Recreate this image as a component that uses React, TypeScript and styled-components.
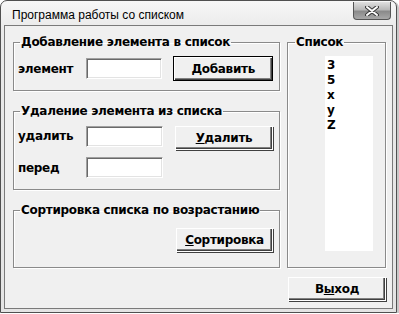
import styled, { createGlobalStyle } from "styled-components";

const GlobalStyle = createGlobalStyle`
    html, body {
        margin: 0;
        padding: 0;
        background: #ffffff;
    }
    * {
        box-sizing: border-box;
    }
`;

const Window = styled.div`
    width: 397px;
    height: 313px;
    display: flex;
    flex-direction: column;
    border: 1px solid #505050;
    border-radius: 7px 7px 0 0;
    background: linear-gradient(#f7f7f7, #e9e9e9 30px, #e4e4e4);
    box-shadow: 2px 1px 0 #c8c8c8;
`;

const TitleBar = styled.div`
    height: 24px;
    display: flex;
    align-items: center;
    justify-content: space-between;
    padding: 0 5px 0 11px;
`;

const Caption = styled.span`
    font-family: "Liberation Sans", "Noto Sans", sans-serif;
    font-size: 12px;
    color: #000;
    margin-top: 3px;
`;

const CloseButton = styled.div`
    width: 38px;
    height: 18px;
    margin-top: -4px;
    border: 1px solid #555;
    border-top: none;
    border-radius: 0 0 4px 4px;
    background: linear-gradient(#e0e0e0, #b8b8b8 45%, #8a8a8a 55%, #a8a8a8);
    display: flex;
    align-items: center;
    justify-content: center;
`;

const Client = styled.div`
    flex: 1;
    margin: 0 3px 3px 3px;
    border: 1px solid #7a7a7a;
    background: #f0f0f0;
    padding: 9px 8px 0 8px;
    display: grid;
    grid-template-columns: 267px 99px;
    grid-template-rows: 233px auto;
    column-gap: 7px;
    row-gap: 9px;
    font-family: "DejaVu Sans", "Liberation Sans", sans-serif;
    font-weight: bold;
    font-size: 12px;
    letter-spacing: -0.3px;
    color: #000;
`;

const Column = styled.div<{ $gap: number }>`
    display: flex;
    flex-direction: column;
    gap: ${(p) => p.$gap}px;
`;

const Group = styled.fieldset<{ $pad: string; $grow?: boolean }>`
    margin: 0;
    min-width: 0;
    border: 1px solid #8a8a8a;
    box-shadow: 1px 1px 0 #ffffff, inset 1px 1px 0 #ffffff;
    padding: ${(p) => p.$pad};
    flex: ${(p) => (p.$grow ? 1 : "none")};
    display: flex;
    flex-direction: column;
`;

const Legend = styled.legend<{ $offset?: number }>`
    padding: 0 1px;
    margin-left: ${(p) => p.$offset ?? 2}px;
    line-height: 14px;
    white-space: nowrap;
`;

const Row = styled.div<{ $justify?: string; $top: number; $align?: string }>`
    display: flex;
    align-items: ${(p) => p.$align ?? "center"};
    justify-content: ${(p) => p.$justify ?? "flex-start"};
    margin-top: ${(p) => p.$top}px;
`;

const Label = styled.span<{ $top?: number }>`
    width: 68px;
    margin-top: ${(p) => p.$top ?? 0}px;
`;

const Spacer = styled.div<{ $w: number }>`
    width: ${(p) => p.$w}px;
`;

const TextBox = styled.div`
    width: 77px;
    height: 21px;
    background: #ffffff;
    border-top: 1px solid #a0a0a0;
    border-left: 1px solid #a0a0a0;
    border-right: 1px solid #ffffff;
    border-bottom: 1px solid #ffffff;
    box-shadow: inset 1px 1px 0 #696969, inset -1px -1px 0 #e3e3e3;
`;

const Button = styled.div<{ $default?: boolean; $width: number }>`
    width: ${(p) => p.$width}px;
    height: ${(p) => (p.$default ? 25 : 24)}px;
    display: flex;
    align-items: center;
    justify-content: center;
    background: #f0f0f0;
    border: 1px solid ${(p) => (p.$default ? "#000" : "#ffffff")};
    box-shadow: ${(p) =>
        p.$default
            ? "inset 1px 1px 0 #ffffff, inset -1px -1px 0 #404040, inset -2px -2px 0 #808080"
            : "inset -1px -1px 0 #404040, inset -2px -2px 0 #808080, 1px 1px 0 #404040"};
`;

const ListBox = styled.div`
    width: 48px;
    height: 195px;
    margin: 7px 0 0 37px;
    background: #ffffff;
    padding: 2px 0 0 2px;
    display: flex;
    flex-direction: column;
    line-height: 15px;
`;

const ExitCell = styled.div`
    grid-column: 2;
    padding-left: 1px;
`;

const listItems = ["3", "5", "x", "y", "Z"];

export default function App() {
    return (
        <>
            <GlobalStyle />
            <Window>
                <TitleBar>
                    <Caption>Программа работы со списком</Caption>
                    <CloseButton>
                        <svg width="14" height="10" viewBox="0 0 14 10">
                            <path d="M2 1 L12 9 M12 1 L2 9" stroke="#3a3a3a" strokeWidth="4" strokeLinecap="round" />
                            <path d="M2 1 L12 9 M12 1 L2 9" stroke="#ffffff" strokeWidth="2" strokeLinecap="round" />
                        </svg>
                    </CloseButton>
                </TitleBar>
                <Client>
                    <Column $gap={13}>
                        <Group $pad="0 6px 9px 4px">
                            <Legend>Добавление элемента в список</Legend>
                            <Row $top={7}>
                                <Label>элемент</Label>
                                <TextBox />
                                <Spacer $w={11} />
                                <Button $default $width={100}>
                                    <span><u>Д</u>обавить</span>
                                </Button>
                            </Row>
                        </Group>
                        <Group $pad="0 6px 11px 4px">
                            <Legend>Удаление элемента из списка</Legend>
                            <Row $top={8} $align="flex-start">
                                <Label $top={3}>удалить</Label>
                                <TextBox />
                                <Spacer $w={12} />
                                <Button $width={98}>
                                    <span><u>У</u>далить</span>
                                </Button>
                            </Row>
                            <Row $top={7}>
                                <Label>перед</Label>
                                <TextBox />
                            </Row>
                        </Group>
                        <Group $pad="0 6px 13px 4px" $grow>
                            <Legend>Сортировка списка по возрастанию</Legend>
                            <Row $justify="flex-end" $top={11}>
                                <Button $width={97}>
                                    <span><u>С</u>ортировка</span>
                                </Button>
                            </Row>
                        </Group>
                    </Column>
                    <Group $pad="0">
                        <Legend $offset={7}>Список</Legend>
                        <ListBox>
                            {listItems.map((item) => (
                                <span key={item}>{item}</span>
                            ))}
                        </ListBox>
                    </Group>
                    <ExitCell>
                        <Button $width={98}>
                            <span>В<u>ы</u>ход</span>
                        </Button>
                    </ExitCell>
                </Client>
            </Window>
        </>
    );
}
